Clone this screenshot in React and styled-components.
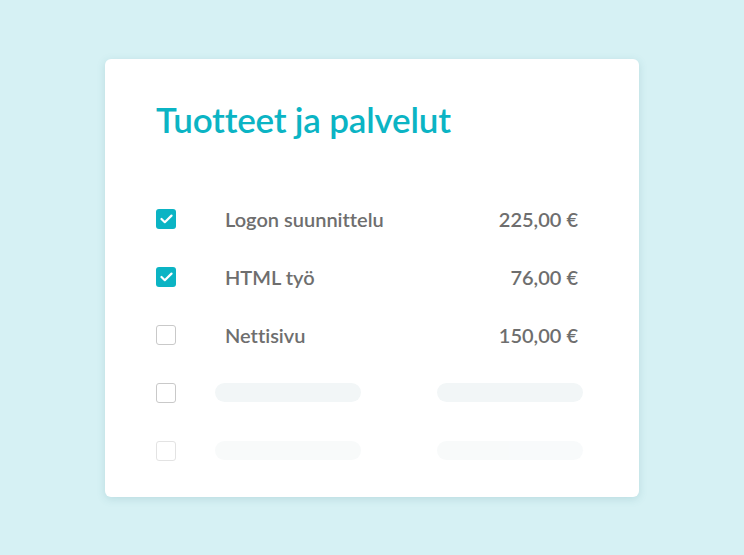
import React from 'react'
import styled, { createGlobalStyle } from 'styled-components'

const GlobalStyle = createGlobalStyle`
  html, body {
    margin: 0;
    padding: 0;
    background: #d6f1f4;
  }
  body {
    font-family: Lato, "Open Sans", sans-serif;
    font-variant-ligatures: none;
  }
`

const items = [
  { name: 'Logon suunnittelu', price: '225,00 €', checked: true },
  { name: 'HTML työ', price: '76,00 €', checked: true },
  { name: 'Nettisivu', price: '150,00 €', checked: false },
]

const CheckIcon = () => (
  <svg width="13" height="10" viewBox="0 0 13 10" fill="none">
    <path d="M1.5 5L4.8 8.2L11.5 1.6" stroke="#fff" strokeWidth="2.2" strokeLinecap="round" strokeLinejoin="round" />
  </svg>
)

export default function App() {
  return (
    <>
      <GlobalStyle />
      <Page>
        <Card>
          <Title>Tuotteet ja palvelut</Title>
          <List>
            {items.map((item, index) => (
              <Row key={index}>
                <Box checked={item.checked}>{item.checked && <CheckIcon />}</Box>
                <Name>{item.name}</Name>
                <Price>{item.price}</Price>
              </Row>
            ))}
            <Row>
              <Box />
              <NameCell><Bar /></NameCell>
              <Bar />
            </Row>
            <Row faded>
              <Box />
              <NameCell><Bar /></NameCell>
              <Bar />
            </Row>
          </List>
        </Card>
      </Page>
    </>
  )
}

const Page = styled.div`
  width: 744px;
  height: 555px;
  display: flex;
  align-items: center;
  justify-content: center;
`

const Card = styled.div`
  width: 534px;
  height: 438px;
  box-sizing: border-box;
  background: #fff;
  border-radius: 6px;
  box-shadow: 0 2px 8px rgba(60, 130, 140, 0.18);
  padding: 38px 56px 0 51px;
`

const Title = styled.h1`
  margin: 0;
  font-size: 35px;
  line-height: 44px;
  font-weight: 600;
  letter-spacing: -0.2px;
  color: #0bb4c4;
`

const List = styled.div`
  margin-top: 68px;
  display: flex;
  flex-direction: column;
  gap: 38px;
`

const Row = styled.div`
  display: flex;
  align-items: center;
  height: 20px;
  opacity: ${props => props.faded ? 0.5 : 1};
`

const Box = styled.div`
  width: 20px;
  height: 20px;
  box-sizing: border-box;
  border-radius: 3px;
  border: ${props => props.checked ? 'none' : '1.5px solid #c9c9c9'};
  background: ${props => props.checked ? '#0bb4c4' : '#fff'};
  display: flex;
  align-items: center;
  justify-content: center;
  flex: none;
`

const NameCell = styled.div`
  width: 222px;
  margin-left: 39px;
`

const Name = styled.div`
  width: 212px;
  margin-left: 49px;
  font-size: 20px;
  line-height: 20px;
  font-weight: 600;
  color: #6e6e6e;
  white-space: nowrap;
`

const Price = styled.div`
  width: 141px;
  padding-right: 5px;
  text-align: right;
  font-size: 20px;
  line-height: 20px;
  font-weight: 600;
  color: #6e6e6e;
  white-space: nowrap;
`

const Bar = styled.div`
  width: 146px;
  height: 19px;
  border-radius: 10px;
  background: #f2f6f7;
`
